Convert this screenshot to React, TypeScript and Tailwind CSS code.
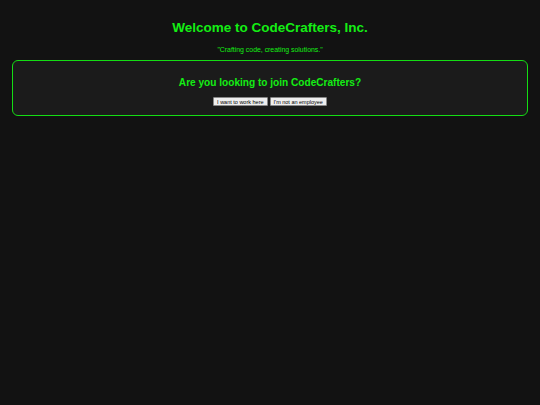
import React from 'react';

const App = () => {
  return (
    <div className="min-h-[405px] w-full bg-[#121212] font-['Liberation_Sans',Arial,sans-serif] text-[#14ee14]">
      <div className="px-3 pt-[19px]">
        <h1 className="text-center text-[13.5px] font-bold leading-[18px]">Welcome to CodeCrafters, Inc.</h1>
        <p className="mt-[8px] text-center text-[6.9px] leading-[10px]">"Crafting code, creating solutions."</p>
        <div className="mt-[5px] flex h-[56px] flex-col items-center rounded-[6px] border-[1.5px] border-[#14dd14] bg-[#1b1b1b] pt-[15px]">
          <h2 className="text-[10.1px] font-bold leading-[13px]">Are you looking to join CodeCrafters?</h2>
          <div className="mt-[8px] flex gap-[2px]">
            <button className="h-[9px] rounded-[1px] border-[0.5px] border-[#888] bg-[#efefef] px-[3px] text-[5.5px] leading-[8px] text-black">
              I want to work here
            </button>
            <button className="h-[9px] rounded-[1px] border-[0.5px] border-[#888] bg-[#efefef] px-[3px] text-[5.5px] leading-[8px] text-black">
              I'm not an employee
            </button>
          </div>
        </div>
      </div>
    </div>
  );
};

export default App;
